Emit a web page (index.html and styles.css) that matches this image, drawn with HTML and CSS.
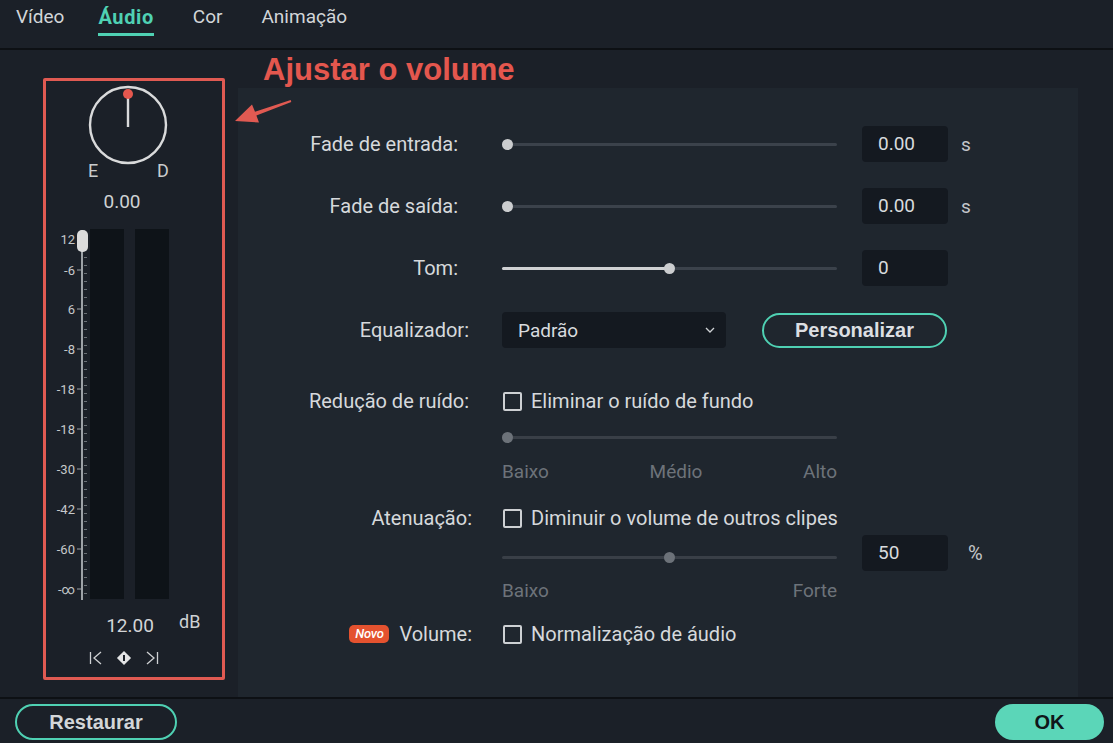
FILE: index.html
```html
<!DOCTYPE html>
<html lang="pt">
<head>
<meta charset="utf-8">
<title>Áudio</title>
<link rel="stylesheet" href="styles.css">
</head>
<body>
<div class="app">
  <div class="tabs">
    <div class="tab">Vídeo</div>
    <div class="tab active">Áudio</div>
    <div class="tab">Cor</div>
    <div class="tab">Animação</div>
  </div>

  <div class="main">
    <div class="side">
      <div class="vbox">
        <svg class="knob" width="176" height="134" viewBox="0 0 176 134">
          <circle cx="82" cy="44" r="38" fill="none" stroke="#d9dadb" stroke-width="2.4"/>
          <line x1="82" y1="14" x2="82" y2="46" stroke="#d9dadb" stroke-width="2.4"/>
          <circle cx="82" cy="13" r="5" fill="#e5574e"/>
          <text class="k-lbl" x="42" y="96">E</text>
          <text class="k-lbl" x="111" y="96">D</text>
          <text class="k-val" x="76" y="127" text-anchor="middle">0.00</text>
        </svg>
        <svg class="meter" width="176" height="462" viewBox="0 0 176 462">
          <rect x="44" y="14" width="34" height="370" fill="#0e1318"/>
          <rect x="89" y="14" width="34" height="370" fill="#0e1318"/>
          <line x1="36" y1="15" x2="36" y2="385" stroke="#9ea3a8" stroke-width="2"/>
          <line x1="39.5" y1="18" x2="39.5" y2="382" stroke="#6c7278" stroke-width="3" stroke-dasharray="1 7"/>
          <g stroke="#9ea3a8" stroke-width="1">
            <line x1="31" y1="55" x2="35" y2="55"/>
            <line x1="31" y1="94" x2="35" y2="94"/>
            <line x1="31" y1="134" x2="35" y2="134"/>
            <line x1="31" y1="174" x2="35" y2="174"/>
            <line x1="31" y1="214" x2="35" y2="214"/>
            <line x1="31" y1="254" x2="35" y2="254"/>
            <line x1="31" y1="294" x2="35" y2="294"/>
            <line x1="31" y1="334" x2="35" y2="334"/>
            <line x1="31" y1="374" x2="35" y2="374"/>
          </g>
          <g class="m-lbl" text-anchor="end">
            <text x="29" y="29">12</text>
            <text x="29" y="60">-6</text>
            <text x="29" y="99">6</text>
            <text x="29" y="139">-8</text>
            <text x="29" y="179">-18</text>
            <text x="29" y="219">-18</text>
            <text x="29" y="259">-30</text>
            <text x="29" y="299">-42</text>
            <text x="29" y="339">-60</text>
            <text x="29" y="379">-∞</text>
          </g>
          <rect x="31" y="15" width="11" height="22" rx="5" fill="#dcdcdc"/>
          <text class="m-val" x="84" y="417" text-anchor="middle">12.00</text>
          <text class="m-db" x="133" y="413">dB</text>
          <g stroke="#cfd1d3" stroke-width="1.3" fill="none">
            <line x1="44.5" y1="437" x2="44.5" y2="449"/>
            <polyline points="55,437 48,443 55,449"/>
            <polyline points="101,437 108,443 101,449"/>
            <line x1="111.5" y1="437" x2="111.5" y2="449"/>
          </g>
          <rect x="73" y="438" width="10" height="10" fill="#e2e3e4" transform="rotate(45 78 443)"/>
          <rect x="77" y="440" width="2" height="6" fill="#1b2028"/>
        </svg>
      </div>
    </div>

    <div class="panel">
      <div class="group">
        <div class="row">
          <div class="lbl">Fade de entrada:</div>
          <div class="slider"><span class="thumb t0"></span></div>
          <div class="num">0.00</div>
          <div class="unit">s</div>
        </div>
        <div class="row">
          <div class="lbl">Fade de saída:</div>
          <div class="slider"><span class="thumb t0"></span></div>
          <div class="num">0.00</div>
          <div class="unit">s</div>
        </div>
        <div class="row">
          <div class="lbl">Tom:</div>
          <div class="slider"><span class="fill half"></span><span class="thumb tmid"></span></div>
          <div class="num">0</div>
          <div class="unit"></div>
        </div>
        <div class="row">
          <div class="lbl w">Equalizador:</div>
          <div class="eq">
            <div class="select">
              <span>Padrão</span>
              <svg width="10" height="6" viewBox="0 0 10 6"><polyline points="1,1 5,5 9,1" fill="none" stroke="#cfd2d5" stroke-width="1.3"/></svg>
            </div>
            <button class="btn-outline small">Personalizar</button>
          </div>
        </div>
      </div>

      <div class="row nr">
        <div class="lbl w">Redução de ruído:</div>
        <div class="check"><span class="box"></span>Eliminar o ruído de fundo</div>
      </div>
      <div class="row thin gap8">
        <div class="lbl"></div>
        <div class="slider dim"><span class="thumb t0 dim"></span></div>
      </div>
      <div class="row thin gap13">
        <div class="lbl"></div>
        <div class="scale"><span>Baixo</span><span>Médio</span><span>Alto</span></div>
      </div>

      <div class="row aten">
        <div class="lbl x">Atenuação:</div>
        <div class="check"><span class="box"></span>Diminuir o volume de outros clipes</div>
      </div>
      <div class="row gap3">
        <div class="lbl"></div>
        <div class="slider dim low"><span class="thumb tmid dim"></span></div>
        <div class="num">50</div>
        <div class="unit pct">%</div>
      </div>
      <div class="row thin gap8">
        <div class="lbl"></div>
        <div class="scale"><span>Baixo</span><span>Forte</span></div>
      </div>

      <div class="row vol">
        <div class="lbl x"><span class="badge">Novo</span>Volume:</div>
        <div class="check"><span class="box"></span>Normalização de áudio</div>
      </div>
    </div>
  </div>

  <div class="footer">
    <button class="btn-outline">Restaurar</button>
    <button class="btn-ok">OK</button>
  </div>

  <div class="title">Ajustar o volume</div>
  <svg class="arrow" width="66" height="32" viewBox="0 0 66 32">
    <polygon points="5,26 29,27.5 26.4,20.5 61.3,6.9 60.7,5.1 25,16.7 22,9.5" fill="#e05a52"/>
  </svg>
</div>
</body>
</html>
```

FILE: styles.css
```css
* { box-sizing: border-box; }

body {
  margin: 0;
  background: #1b2028;
  font-family: Roboto, "Noto Sans", sans-serif;
  color: #d6d9dc;
}

.app {
  position: relative;
  width: 1113px;
  height: 743px;
  overflow: hidden;
  background: #1b2028;
}

/* tabs */
.tabs {
  height: 50px;
  border-bottom: 2px solid #0d1014;
  display: flex;
  align-items: flex-start;
  padding-left: 16px;
  gap: 39px;
}
.tab {
  font-size: 19px;
  line-height: 24px;
  padding-top: 5px;
  padding-bottom: 4px;
  border-bottom: 3px solid transparent;
  color: #d2d5d8;
}
.tab.active {
  margin-left: -5px;
  color: #4fd1b3;
  font-weight: 700;
  font-size: 20px;
  letter-spacing: 0.6px;
  border-bottom-color: #4fd1b3;
}

/* main */
.main {
  display: flex;
  height: 647px;
}
.side {
  width: 238px;
  flex: none;
}
.vbox {
  margin: 28px 0 0 43px;
  width: 182px;
  height: 602px;
  border: 3px solid #e05a52;
  border-radius: 2px;
  display: flex;
  flex-direction: column;
}
.knob, .meter { display: block; }
.k-lbl { font-family: Roboto, sans-serif; font-size: 18px; fill: #c9ccce; }
.k-val { font-family: Roboto, sans-serif; font-size: 19px; fill: #cfd2d4; }
.m-lbl { font-family: Roboto, sans-serif; font-size: 13px; fill: #c6c9cb; }
.m-val { font-family: Roboto, sans-serif; font-size: 19px; fill: #d3d5d7; }
.m-db { font-family: Roboto, sans-serif; font-size: 18px; fill: #cfd2d4; }

.panel {
  margin-top: 38px;
  width: 840px;
  background: #1f262e;
  padding-top: 38px;
}

.group {
  display: flex;
  flex-direction: column;
  gap: 26px;
}

.row {
  display: grid;
  grid-template-columns: 264px 360px 99px 1fr;
  align-items: center;
  height: 36px;
}
.lbl {
  text-align: right;
  padding-right: 44px;
  font-size: 20px;
  color: #d6d9dc;
  white-space: nowrap;
}
.lbl.w { padding-right: 33px; }
.lbl.x {
  padding-right: 30px;
  display: flex;
  justify-content: flex-end;
  align-items: center;
  gap: 10px;
}

.slider {
  position: relative;
  width: 335px;
  height: 3px;
  background: #3b424b;
  border-radius: 2px;
}
.slider.dim { background: #393f47; }
.slider.low { margin-top: 8px; }
.fill {
  position: absolute;
  left: 0;
  top: 0;
  height: 3px;
  background: #cfd1d3;
  border-radius: 2px;
}
.fill.half { width: 167px; }
.thumb {
  position: absolute;
  top: -4px;
  width: 11px;
  height: 11px;
  border-radius: 50%;
  background: #cbcdcf;
}
.thumb.t0 { left: 0; }
.thumb.tmid { left: 162px; }
.thumb.dim { background: #6c7279; }

.num {
  width: 86px;
  height: 36px;
  background: #141920;
  border-radius: 4px;
  padding-left: 16px;
  line-height: 36px;
  font-size: 19px;
  color: #d8dbde;
}
.unit {
  font-size: 19px;
  color: #c4c7ca;
}
.unit.pct { padding-left: 7px; font-size: 20px; }

.eq {
  grid-column: 2 / 4;
  display: flex;
  align-items: center;
  gap: 36px;
}
.select {
  width: 224px;
  height: 36px;
  background: #141920;
  border-radius: 4px;
  display: flex;
  align-items: center;
  justify-content: space-between;
  padding: 0 11px 0 16px;
  font-size: 19px;
  color: #d8dbde;
}

.btn-outline {
  width: 162px;
  height: 36px;
  border: 2px solid #4fd1b3;
  border-radius: 18px;
  background: transparent;
  color: #d3d6d9;
  font-family: "Liberation Sans", Arial, sans-serif;
  font-weight: 700;
  font-size: 20px;
  padding: 0;
}
.btn-outline.small {
  width: 185px;
  height: 35px;
  color: #dcdfe2;
}
.btn-ok {
  width: 109px;
  height: 36px;
  border: none;
  border-radius: 18px;
  background: #5bd6b8;
  color: #10161a;
  font-family: "Liberation Sans", Arial, sans-serif;
  font-weight: 700;
  font-size: 20px;
  padding: 0;
}

.row.nr { margin-top: 35px; }
.row.thin { height: 20px; }
.row.gap8 { margin-top: 8px; }
.row.gap13 { margin-top: 13px; }
.row.gap3 { margin-top: 3px; }
.row.aten { height: 28px; margin-top: 24px; }
.row.vol { margin-top: 17px; }

.check {
  grid-column: 2 / 4;
  display: flex;
  align-items: center;
  gap: 9px;
  font-size: 20px;
  color: #d6d9dc;
  white-space: nowrap;
}
.box {
  width: 19px;
  height: 19px;
  margin-left: 1px;
  border: 2px solid #cdd0d3;
  border-radius: 2px;
  flex: none;
}

.scale {
  width: 335px;
  display: flex;
  justify-content: space-between;
  font-size: 19px;
  color: #6d737a;
}

.badge {
  background: #e4522f;
  color: #fff;
  font-size: 13px;
  font-style: italic;
  font-weight: 500;
  border-radius: 5px;
  height: 18px;
  line-height: 18px;
  width: 40px;
  text-align: center;
  letter-spacing: -0.3px;
}

/* footer */
.footer {
  height: 46px;
  border-top: 2px solid #0d1014;
  display: flex;
  justify-content: space-between;
  align-items: flex-start;
  padding: 5px 9px 0 15px;
}

/* annotations */
.title {
  position: absolute;
  left: 263px;
  top: 54px;
  font-family: "Liberation Sans", Arial, sans-serif;
  font-weight: 700;
  font-size: 31px;
  line-height: 31px;
  color: #e4574e;
}
.arrow {
  position: absolute;
  left: 230px;
  top: 95px;
}
```
